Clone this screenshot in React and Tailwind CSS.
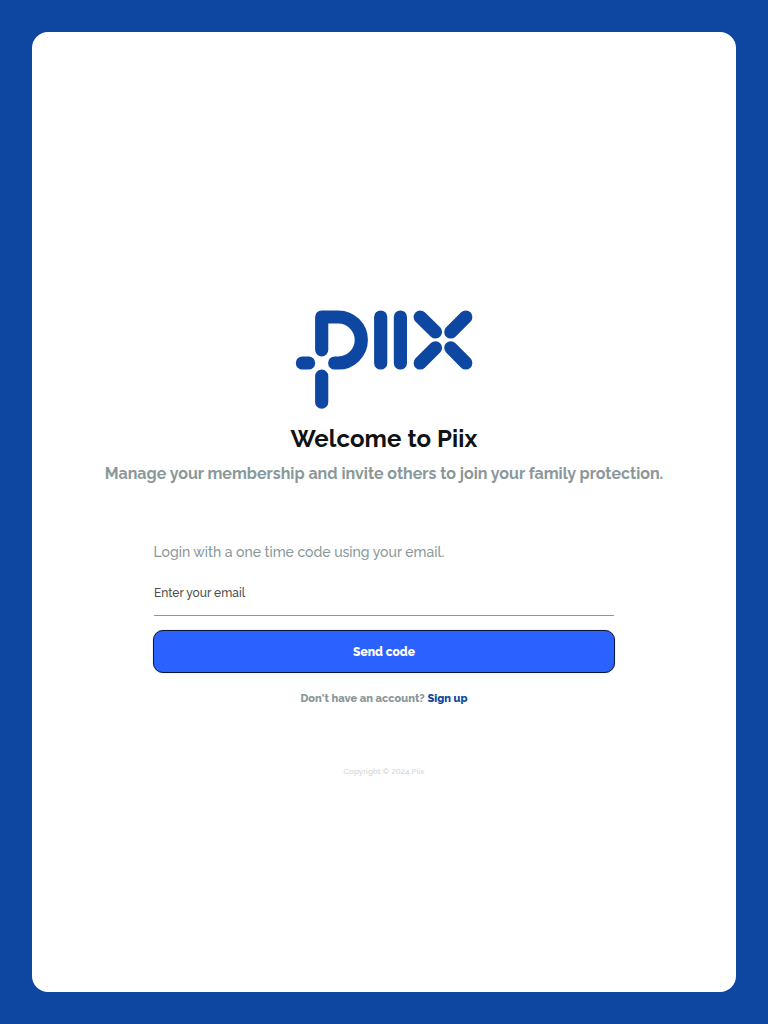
function Logo() {
  return (
    <svg
      viewBox="295 310 178 99"
      className="h-[99px] w-[178px]"
      fill="none"
      stroke="#0e47a1"
      strokeWidth="13.2"
      strokeLinecap="round"
      strokeLinejoin="round"
      role="img"
      aria-label="Piix"
    >
      <path d="M321.7 349.8V317H338.3a23 23 0 0 1 0 46H334.7" />
      <path d="M302.4 363h6.2M321.7 376.2v26" />
      <path d="M380.7 317v46M400.4 317v46" />
      <path d="M420.2 317l15.3 15M465.8 317l-15 15M435.5 347.8l-15.3 15.2M450.8 347.8l15 15.2" />
    </svg>
  );
}

export default function App() {
  return (
    <div className="flex h-screen bg-[#0e47a1] p-8 font-['Raleway','Lato',sans-serif]">
      <main className="flex flex-1 flex-col items-center rounded-2xl bg-white pt-[278px]">
        <Logo />
        <h1 className="mt-3.5 text-2xl leading-8 font-bold tracking-[0.1px] whitespace-nowrap text-[#111213]">
          Welcome to Piix
        </h1>
        <p className="mt-[7px] text-base leading-6 font-bold whitespace-nowrap text-[#8a989b]">
          Manage your membership and invite others to join your family protection.
        </p>
        <form className="mt-14 flex w-[462px] flex-col" onSubmit={(e) => e.preventDefault()}>
          <p className="pl-[0.5px] text-sm leading-5 font-medium whitespace-nowrap text-[#8a989b]">
            Login with a one time code using your email.
          </p>
          <input
            type="email"
            placeholder="Enter your email"
            className="mx-px mt-[18px] h-[36px] border-b border-[#949494] pb-2.5 text-xs font-medium outline-none placeholder:text-[#4b4f50]"
          />
          <button className="mt-3.5 h-[43px] rounded-[10px] border border-[#081b3d] bg-[#2b62ff] text-xs font-extrabold text-white shadow-[0_0_1px_rgba(0,0,0,0.5)]">
            Send code
          </button>
        </form>
        <p className="mt-[18px] text-[11px] leading-4 font-extrabold tracking-[0.03px] whitespace-nowrap text-[#8a989b]">
          <span>Don't have an account? </span>
          <a className="text-[#0e47a1]" href="#signup">Sign up</a>
        </p>
        <p className="mt-[58px] text-[8px] leading-3 font-medium tracking-[0.03px] whitespace-nowrap text-[#cfd3d4]">
          Copyright © 2024 Piix
        </p>
      </main>
    </div>
  );
}
